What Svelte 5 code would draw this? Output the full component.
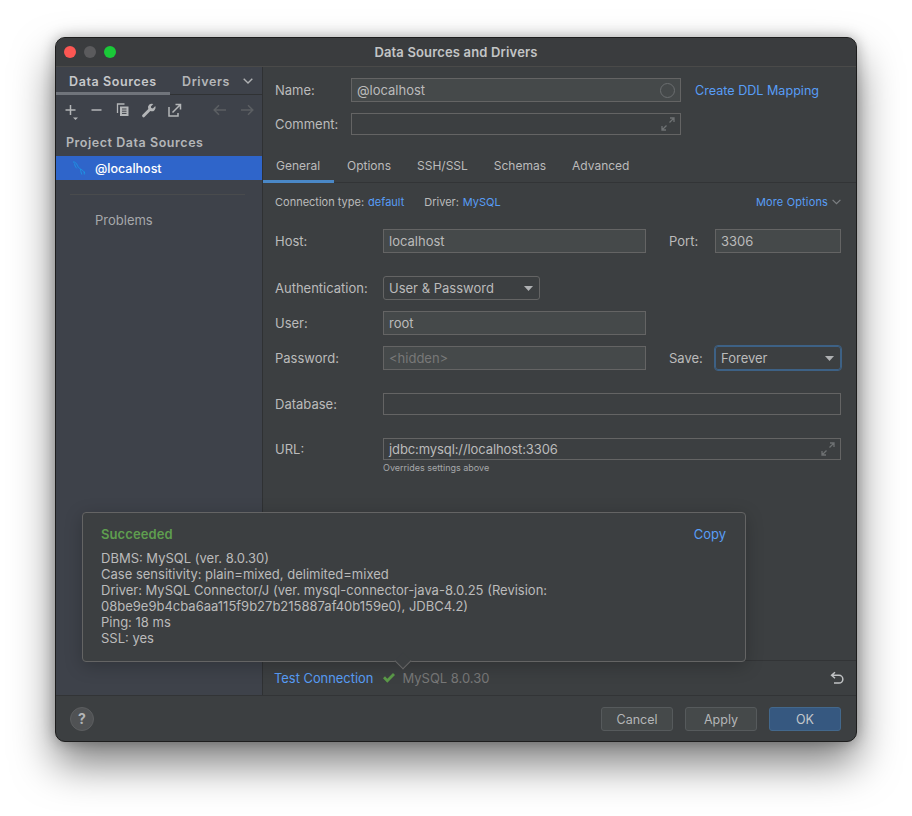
<script lang="ts">
    const mainTabs = ["General", "Options", "SSH/SSL", "Schemas", "Advanced"];
    const resultLines = [
        "DBMS: MySQL (ver. 8.0.30)",
        "Case sensitivity: plain=mixed, delimited=mixed",
        "Driver: MySQL Connector/J (ver. mysql-connector-java-8.0.25 (Revision:",
        "08be9e9b4cba6aa115f9b27b215887af40b159e0), JDBC4.2)",
        "Ping: 18 ms",
        "SSL: yes",
    ];
</script>

{#snippet expand()}
    <svg class="expand" width="14" height="14" viewBox="0 0 14 14" fill="none" stroke="#6e7173" stroke-width="1.3">
        <path d="M8.5 5.5 13 1M9 1h4v4" />
        <path d="M5.5 8.5 1 13M1 9v4h4" />
    </svg>
{/snippet}

{#snippet caret()}
    <svg class="caret" width="9" height="5" viewBox="0 0 9 5"><path d="M0 0h9L4.500 5z" fill="#afb1b3" /></svg>
{/snippet}

<div class="page">
    <div class="window">
        <header class="titlebar">
            <div class="lights">
                <span class="light red"></span>
                <span class="light grey"></span>
                <span class="light green"></span>
            </div>
            <span class="title">Data Sources and Drivers</span>
        </header>

        <div class="body">
            <aside class="sidebar">
                <div class="side-tabs">
                    <span class="side-tab active">Data Sources</span>
                    <span class="side-tab drivers">Drivers</span>
                    <svg class="side-chevron" width="10" height="6" viewBox="0 0 10 6" fill="none" stroke="#afb1b3" stroke-width="1.4">
                        <path d="M.7.7 5 5 9.300.7" />
                    </svg>
                </div>
                <div class="toolbar">
                    <svg width="16" height="18" viewBox="0 0 16 18" class="t-plus">
                        <path d="M5.500 2v10M.5 7h10" stroke="#b4b6b8" stroke-width="1.500" fill="none" />
                        <path d="M8 14.500h5l-2.500 2.500z" fill="#b4b6b8" />
                    </svg>
                    <svg width="14" height="14" viewBox="0 0 14 14" class="t-minus">
                        <path d="M1.500 7h10" stroke="#b4b6b8" stroke-width="1.500" />
                    </svg>
                    <svg width="14" height="14" viewBox="0 0 14 14" class="t-copy" fill="none">
                        <path d="M8.500 1H1.500v9" stroke="#b4b6b8" stroke-width="1.300" />
                        <path d="M4 3.500h8.500V13H4z" fill="#b4b6b8" />
                        <path d="M6 6h4.500M6 8.200h4.500M6 10.400h4.500" stroke="#3e4249" stroke-width="1" />
                    </svg>
                    <svg width="16" height="16" viewBox="0 0 16 16" class="t-wrench">
                        <path d="M1.500 12.800 7.300 7a3.800 3.800 0 0 1 5-5l-2.400 2.400.3 1.700 1.700.3L14.300 4a3.800 3.800 0 0 1-5 5l-5.600 5.800a1.300 1.300 0 0 1-2.200-2z" fill="#b4b6b8" />
                    </svg>
                    <svg width="14" height="14" viewBox="0 0 14 14" class="t-export" fill="none" stroke="#b4b6b8" stroke-width="1.500">
                        <path d="M1 4v9h9V10" />
                        <path d="M4.500 9.500 12 2M7.500 1.500H12.500V6.500" />
                    </svg>
                    <span class="spacer"></span>
                    <svg width="14" height="12" viewBox="0 0 14 12" class="t-back" fill="none" stroke="#5c5f63" stroke-width="1.500">
                        <path d="M13 6H1.500M6 1.200 1.200 6 6 10.800" />
                    </svg>
                    <svg width="14" height="12" viewBox="0 0 14 12" class="t-forward" fill="none" stroke="#5c5f63" stroke-width="1.500">
                        <path d="M1 6h11.500M8 1.200 12.800 6 8 10.800" />
                    </svg>
                </div>
                <div class="group-title">Project Data Sources</div>
                <div class="source-row">
                    <svg width="15" height="15" viewBox="0 0 15 15" fill="none" stroke="#1a9ae6" stroke-width="0.8">
                        <path d="M1 1c2.200-.2 3.400 1.200 4.300 3.200.7 1.500 1.500 3 3.200 3.800 1.600.8 3 1.800 4.500 4.200" />
                        <path d="M2.500 2.500c.3 2 1 3.500 2.300 4.800M8.500 8c.2 2 .5 3.600 1.300 5.500M12 10.500l.3 3" />
                    </svg>
                    <span>@localhost</span>
                </div>
                <div class="side-divider"></div>
                <div class="problems">Problems</div>
            </aside>

            <main class="pane">
                <div class="row name-row">
                    <label class="label short" for="name">Name:</label>
                    <div class="field wide filled" id="name">
                        <span>@localhost</span>
                        <span class="circle"></span>
                    </div>
                    <a class="link ddl" href="#ddl">Create DDL Mapping</a>
                </div>
                <div class="row comment-row">
                    <label class="label short" for="comment">Comment:</label>
                    <div class="field wide" id="comment">{@render expand()}</div>
                </div>

                <nav class="tabs">
                    {#each mainTabs as tab, i}
                        <span class="tab" class:selected={i === 0}>{tab}</span>
                    {/each}
                </nav>

                <div class="row conn-row">
                    <span>Connection type:</span>
                    <a class="link" href="#type">default</a>
                    <span class="driver">Driver:</span>
                    <a class="link" href="#driver">MySQL</a>
                    <span class="spacer"></span>
                    <a class="link more" href="#more">More Options</a>
                    <svg width="9" height="6" viewBox="0 0 9 6" fill="none" stroke="#7d8083" stroke-width="1.200">
                        <path d="M.6.800 4.500 4.700 8.400.800" />
                    </svg>
                </div>

                <div class="row host-row">
                    <span class="label">Host:</span>
                    <div class="field main filled">localhost</div>
                    <span class="side-label">Port:</span>
                    <div class="field small filled">3306</div>
                </div>
                <div class="row auth-row">
                    <span class="label">Authentication:</span>
                    <div class="select auth">User &amp; Password {@render caret()}</div>
                </div>
                <div class="row user-row">
                    <span class="label">User:</span>
                    <div class="field main filled">root</div>
                </div>
                <div class="row pass-row">
                    <span class="label">Password:</span>
                    <div class="field main filled muted">&lt;hidden&gt;</div>
                    <span class="side-label">Save:</span>
                    <div class="select save">Forever {@render caret()}</div>
                </div>
                <div class="row db-row">
                    <span class="label">Database:</span>
                    <div class="field grow"></div>
                </div>
                <div class="row url-row">
                    <span class="label">URL:</span>
                    <div class="field grow url">jdbc:mysql://localhost:3306 {@render expand()}</div>
                </div>
                <div class="hint">Overrides settings above</div>

                <div class="test-bar">
                    <a class="link test" href="#test">Test Connection</a>
                    <svg width="14" height="12" viewBox="0 0 14 12"><path d="M1 6.300 3 4.300 5.300 6.700 11 1l2 2-7.700 7.800z" fill="#5b9a48" /></svg>
                    <span class="version">MySQL 8.0.30</span>
                    <span class="spacer"></span>
                    <svg class="undo" width="14" height="14" viewBox="0 0 14 14" fill="none" stroke="#c0c2c4" stroke-width="1.500">
                        <path d="M5 1.200 1.600 4.300 5 7.200M2 4.300h7a3.800 3.800 0 0 1 0 7.700H4" />
                    </svg>
                </div>
            </main>
        </div>

        <footer class="footer">
            <span class="help">?</span>
            <span class="spacer"></span>
            <button class="btn">Cancel</button>
            <button class="btn">Apply</button>
            <button class="btn primary">OK</button>
        </footer>

        <div class="popup">
            <div class="popup-head">
                <span class="ok">Succeeded</span>
                <a class="link copy" href="#copy">Copy</a>
            </div>
            {#each resultLines as line}
                <div class="line">{line}</div>
            {/each}
            <span class="arrow"></span>
        </div>
    </div>
</div>

<style>
    :global(body) {
        background: #fff;
        font-family: Inter, "Liberation Sans", sans-serif;
    }

    .page {
        box-sizing: border-box;
        width: 912px;
        height: 816px;
        padding: 37px 0 0 55px;
        overflow: hidden;
    }

    .window {
        position: relative;
        box-sizing: border-box;
        width: 802px;
        height: 705px;
        display: flex;
        flex-direction: column;
        background: #3c3f41;
        border: 1px solid #1d1d1d;
        border-radius: 10px;
        box-shadow: 0 22px 42px rgba(0, 0, 0, 0.5), 0 0 14px rgba(0, 0, 0, 0.28);
        font-size: 13px;
        color: #bbbbbb;
    }

    .titlebar {
        position: relative;
        box-sizing: border-box;
        height: 29px;
        flex: none;
        display: flex;
        align-items: center;
        justify-content: center;
        background: #3a3c3e;
        border-bottom: 1px solid #4a4a49;
        border-radius: 9px 9px 0 0;
    }

    .lights {
        position: absolute;
        left: 8px;
        top: 8px;
        display: flex;
        gap: 8px;
    }

    .light {
        width: 12px;
        height: 12px;
        border-radius: 50%;
    }

    .red { background: #fc5753; }
    .grey { background: #5b5b5d; }
    .green { background: #1ac938; }

    .title {
        font-weight: 600;
        font-size: 13px;
        letter-spacing: 0.16px;
        color: #c3c5c6;
    }

    .body {
        flex: 1;
        min-height: 0;
        display: flex;
        border-bottom: 1px solid #323436;
    }

    .sidebar {
        width: 206px;
        flex: none;
        background: #3e424a;
        border-right: 1px solid #2f3133;
    }

    .side-tabs {
        position: relative;
        height: 28px;
        box-sizing: border-box;
        display: flex;
        align-items: center;
        border-bottom: 1px solid #303234;
        font-weight: 600;
        font-size: 12.5px;
        letter-spacing: 0.6px;
    }

    .side-tab.active {
        box-sizing: border-box;
        width: 114px;
        height: 28px;
        line-height: 29px;
        padding-left: 13px;
        color: #c6c8ca;
        border-bottom: 3px solid #70747b;
    }

    .drivers {
        margin: 2px 0 0 12px;
        color: #b4b6b8;
    }

    .side-chevron {
        margin-left: 13px;
    }

    .toolbar {
        height: 29px;
        display: flex;
        align-items: center;
        padding: 0 8px 1px 9px;
    }

    .toolbar svg { flex: none; }
    .t-plus { margin-top: 4px; }
    .t-minus { margin-left: 9px; }
    .t-copy { margin-left: 12px; }
    .t-wrench { margin-left: 11px; }
    .t-export { margin-left: 11px; }
    .t-forward { margin-left: 13px; }

    .spacer {
        flex: 1;
    }

    .group-title {
        margin-top: 9px;
        height: 22px;
        padding-left: 10px;
        line-height: 17px;
        font-size: 12.5px;
        font-weight: 600;
        color: #b4b6b8;
        letter-spacing: 0.55px;
    }

    .source-row {
        height: 24px;
        display: flex;
        align-items: center;
        gap: 16px;
        padding-left: 16px;
        background: #2f65ca;
        color: #fff;
        font-size: 12.5px;
        font-weight: 500;
    }

    .source-row svg {
        margin-top: 1px;
        margin-right: -8px;
    }

    .side-divider {
        margin: 14px 17px 0 14px;
        height: 1px;
        background: #494b4d;
    }

    .problems {
        margin-top: 17px;
        padding-left: 39px;
        color: #a6a8aa;
    }

    .pane {
        position: relative;
        flex: 1;
        min-width: 0;
        display: flex;
        flex-direction: column;
        padding-top: 11px;
    }

    .row {
        display: flex;
        align-items: center;
        padding: 0 15px 0 12px;
        flex: none;
    }

    .label {
        width: 108px;
        flex: none;
    }

    .label.short {
        width: 76px;
    }

    .field {
        box-sizing: border-box;
        height: 24px;
        display: flex;
        align-items: center;
        justify-content: space-between;
        padding: 0 4px 0 5px;
        border: 1px solid #646464;
    }

    .filled {
        background: #45494a;
    }

    .muted {
        color: #787878;
    }

    .wide { width: 330px; }
    .main { width: 263px; }
    .small { width: 126px; }
    .grow { flex: 1; }

    .circle {
        width: 13px;
        height: 13px;
        border: 1px solid #6b6e70;
        border-radius: 50%;
        margin-right: 1px;
    }

    .link {
        color: #589df6;
        text-decoration: none;
    }

    .ddl {
        margin-left: 14px;
        font-size: 12.6px;
    }

    .comment-row { margin-top: 11px; }
    .comment-row .field { height: 22px; justify-content: flex-end; }
    .expand { margin-right: 1px; }

    .tabs {
        margin-top: 15px;
        height: 33px;
        flex: none;
        box-sizing: border-box;
        display: flex;
        border-bottom: 1px solid #323436;
    }

    .tab {
        height: 32px;
        box-sizing: border-box;
        padding: 0 13px;
        line-height: 32px;
        font-size: 12px;
    }

    .tab.selected {
        padding: 0 13px;
        width: 71px;
        height: 33px;
        border-bottom: 3px solid #4a88c7;
    }

    .conn-row {
        margin-top: 11px;
        height: 16px;
        font-size: 11px;
    }

    .conn-row .link { margin-left: 4px; }
    .conn-row .driver { margin-left: 20px; }
    .conn-row .more { margin-right: 4px; letter-spacing: 0.15px; }

    .side-label {
        width: 46px;
        margin-left: 23px;
        flex: none;
    }

    .host-row { margin-top: 19px; }
    .auth-row { margin-top: 23px; }
    .user-row { margin-top: 11px; }
    .pass-row { margin-top: 11px; }
    .db-row { margin-top: 23px; }
    .url-row { margin-top: 23px; }
    .db-row .field, .url-row .field { height: 22px; }
    .url { letter-spacing: -0.1px; }

    .select {
        box-sizing: border-box;
        height: 24px;
        display: flex;
        align-items: center;
        justify-content: space-between;
        padding: 0 6px 0 5px;
        border: 1px solid #646464;
        border-radius: 3px;
    }

    .auth { width: 157px; }
    .save {
        width: 126px;
        border-color: #3d6185;
        outline: 1px solid #3d6185;
    }

    .hint {
        margin: 2px 0 0 120px;
        height: 12px;
        line-height: 12px;
        font-size: 9px;
        color: #a6a8aa;
        flex: none;
    }

    .test-bar {
        margin-top: auto;
        height: 35px;
        box-sizing: border-box;
        flex: none;
        display: flex;
        align-items: center;
        padding: 0 12px 0 11px;
        border-top: 1px solid #323436;
    }

    .test {
        margin-right: 9px;
        font-size: 12.9px;
    }

    .version {
        margin-left: 6px;
        color: #787878;
    }

    .footer {
        height: 45px;
        flex: none;
        display: flex;
        align-items: center;
        padding: 0 15px 0 14px;
        box-sizing: border-box;
        gap: 12px;
    }

    .help {
        box-sizing: border-box;
        width: 24px;
        height: 24px;
        border-radius: 50%;
        background: #505254;
        border: 1px solid #5c5e60;
        color: #b4b6b8;
        font-weight: 700;
        font-size: 14px;
        line-height: 22px;
        text-align: center;
    }

    .btn {
        box-sizing: border-box;
        width: 72px;
        height: 24px;
        padding: 1px 0 0;
        font: inherit;
        font-size: 12.5px;
        color: #b4b6b8;
        background: #45494a;
        border: 1px solid #565a5c;
        border-radius: 3px;
    }

    .btn.primary {
        background: #365880;
        border-color: #43688c;
        color: #c4c8cc;
    }

    .popup {
        position: absolute;
        left: 26px;
        top: 474px;
        box-sizing: border-box;
        width: 664px;
        height: 150px;
        padding: 13px 19px 0 18px;
        background: #3c3f41;
        border: 1px solid #646464;
        border-radius: 4px;
        box-shadow: 0 4px 18px rgba(0, 0, 0, 0.22);
    }

    .popup-head {
        display: flex;
        justify-content: space-between;
        height: 24px;
        line-height: 16px;
    }

    .ok {
        font-weight: 600;
        letter-spacing: 0.1px;
        color: #5f9e4f;
    }

    .line {
        height: 16px;
        line-height: 16px;
    }

    .arrow {
        position: absolute;
        left: 314px;
        bottom: -6px;
        width: 11px;
        height: 11px;
        background: #3c3f41;
        border-right: 1px solid #646464;
        border-bottom: 1px solid #646464;
        transform: rotate(45deg);
    }
</style>
